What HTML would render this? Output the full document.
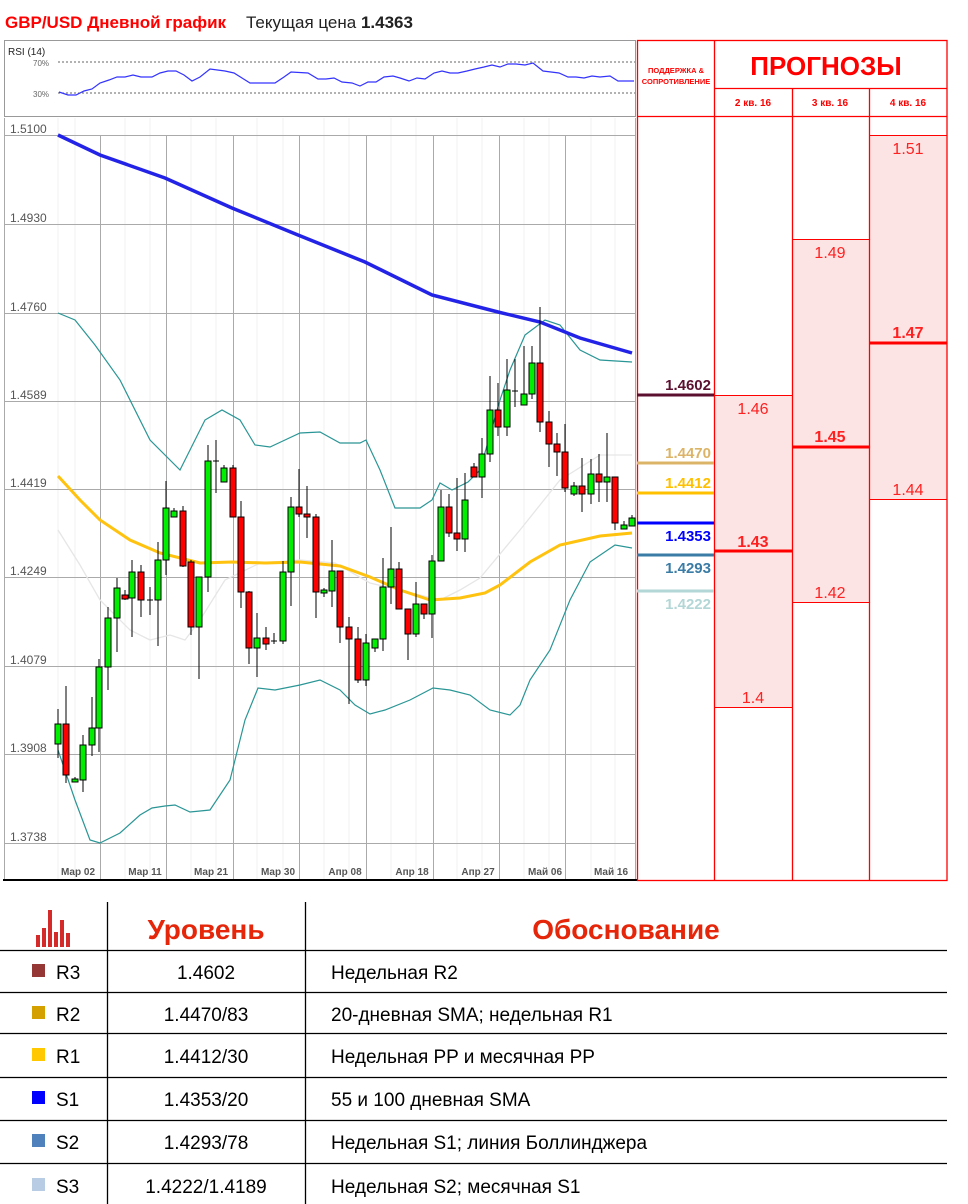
<!DOCTYPE html>
<html><head><meta charset="utf-8"><style>
html,body{margin:0;padding:0;background:#fff;width:968px;height:1204px;overflow:hidden}
svg{display:block;font-family:"Liberation Sans","DejaVu Sans",sans-serif}
</style></head><body>
<svg width="968" height="1204" viewBox="0 0 968 1204" xmlns="http://www.w3.org/2000/svg">
<!-- header -->
<text x="5" y="28" font-size="17" font-weight="bold" fill="#ff0000">GBP/USD Дневной график</text>
<text x="246" y="28" font-size="17" fill="#222">Текущая цена <tspan font-weight="bold">1.4363</tspan></text>
<!-- RSI box -->
<rect x="4.5" y="40.5" width="631" height="76" fill="#fff" stroke="#999"/>
<text x="8" y="55" font-size="10" fill="#222">RSI (14)</text>
<text x="33" y="66" font-size="8" fill="#666">70%</text>
<text x="33" y="97" font-size="8" fill="#666">30%</text>
<line x1="58" y1="62" x2="635" y2="62" stroke="#666" stroke-dasharray="2,2"/>
<line x1="58" y1="93" x2="635" y2="93" stroke="#666" stroke-dasharray="2,2"/>
<polyline fill="none" stroke="#3333ff" stroke-width="1.2" points="59,92 68,95 76,95 84,91 92,89 100,83 109,80 117,77 125,77 133,75 141,77 152,77 160,73 168,71 176,71 184,75 192,81 200,77 210,69 225,71 234,73 242,78 250,83 275,83 284,77 291,72 308,73 318,79 326,79 334,78 342,82 352,83 360,86 368,82 376,82 384,77 393,76 400,78 409,81 417,78 425,79 434,73 442,71 450,73 458,73 467,71 475,69 484,67 492,65 500,67 508,64 516,64 525,65 533,63 543,71 551,72 559,73 568,77 576,77 584,78 592,76 600,77 610,76 618,81 634,81"/>
<!-- chart grid -->
<g stroke="#f0f0f0" stroke-width="1">
<line x1="58" y1="118" x2="58" y2="880"/><line x1="75" y1="118" x2="75" y2="880"/><line x1="125" y1="118" x2="125" y2="880"/><line x1="150" y1="118" x2="150" y2="880"/><line x1="191" y1="118" x2="191" y2="880"/><line x1="216" y1="118" x2="216" y2="880"/><line x1="257" y1="118" x2="257" y2="880"/><line x1="283" y1="118" x2="283" y2="880"/><line x1="324" y1="118" x2="324" y2="880"/><line x1="349" y1="118" x2="349" y2="880"/><line x1="391" y1="118" x2="391" y2="880"/><line x1="416" y1="118" x2="416" y2="880"/><line x1="457" y1="118" x2="457" y2="880"/><line x1="482" y1="118" x2="482" y2="880"/><line x1="524" y1="118" x2="524" y2="880"/><line x1="549" y1="118" x2="549" y2="880"/><line x1="591" y1="118" x2="591" y2="880"/><line x1="615" y1="118" x2="615" y2="880"/>
</g>
<g stroke="#aaa" stroke-width="1">
<line x1="100.5" y1="135" x2="100.5" y2="880"/><line x1="166.5" y1="135" x2="166.5" y2="880"/><line x1="233.5" y1="135" x2="233.5" y2="880"/><line x1="299.5" y1="135" x2="299.5" y2="880"/><line x1="366.5" y1="135" x2="366.5" y2="880"/><line x1="433.5" y1="135" x2="433.5" y2="880"/><line x1="499.5" y1="135" x2="499.5" y2="880"/><line x1="565.5" y1="135" x2="565.5" y2="880"/><line x1="635.5" y1="118" x2="635.5" y2="880"/>
<line x1="4" y1="135.5" x2="635" y2="135.5"/><line x1="4" y1="224.5" x2="635" y2="224.5"/><line x1="4" y1="313.5" x2="635" y2="313.5"/><line x1="4" y1="401.5" x2="635" y2="401.5"/><line x1="4" y1="489.5" x2="635" y2="489.5"/><line x1="4" y1="577.5" x2="635" y2="577.5"/><line x1="4" y1="666.5" x2="635" y2="666.5"/><line x1="4" y1="754.5" x2="635" y2="754.5"/><line x1="4" y1="843.5" x2="635" y2="843.5"/>
<line x1="4.5" y1="118" x2="4.5" y2="880"/>
</g>
<g font-size="12" fill="#555">
<text x="10" y="133">1.5100</text><text x="10" y="222">1.4930</text><text x="10" y="311">1.4760</text><text x="10" y="399">1.4589</text><text x="10" y="487">1.4419</text><text x="10" y="575">1.4249</text><text x="10" y="664">1.4079</text><text x="10" y="752">1.3908</text><text x="10" y="841">1.3738</text>
</g>
<g font-size="10" fill="#555" font-weight="bold" text-anchor="middle">
<text x="78" y="875">Мар 02</text><text x="145" y="875">Мар 11</text><text x="211" y="875">Мар 21</text><text x="278" y="875">Мар 30</text><text x="345" y="875">Апр 08</text><text x="412" y="875">Апр 18</text><text x="478" y="875">Апр 27</text><text x="545" y="875">Май 06</text><text x="611" y="875">Май 16</text>
</g>
<line x1="3" y1="880" x2="637" y2="880" stroke="#000" stroke-width="2"/>
<!-- indicator lines -->
<polyline fill="none" stroke="#e6e6e6" stroke-width="1.3" points="58,530 80,565 100,600 130,630 150,640 170,635 185,640 200,620 225,580 260,563 300,560 335,563 370,583 400,590 420,595 440,600 460,590 480,578 520,530 560,480 600,455 632,455"/>
<polyline fill="none" stroke="#2a9595" stroke-width="1.2" points="58,313 75,320 95,345 120,380 150,440 180,470 205,420 222,410 240,420 255,445 270,447 285,440 300,433 320,432 340,443 360,443 366,440 380,470 395,508 420,508 432,500 440,483 452,490 468,482 480,470 500,400 510,370 525,335 545,320 560,325 580,350 600,360 632,362"/>
<polyline fill="none" stroke="#2a9595" stroke-width="1.2" points="58,750 75,800 90,840 100,843 120,833 140,815 152,808 165,806 175,805 190,812 210,810 230,780 245,720 258,688 275,690 300,685 320,680 340,690 355,705 370,714 385,710 410,700 433,688 450,690 470,695 490,710 510,715 520,705 530,680 550,650 570,600 590,562 615,545 632,548"/>
<polyline fill="none" stroke="#ffc20e" stroke-width="3" points="58,476 80,500 100,520 130,540 160,553 200,563 232,562 265,563 300,562 340,566 370,577 400,590 430,600 460,598 485,593 500,585 530,562 560,545 600,536 632,533"/>
<polyline fill="none" stroke="#2323e8" stroke-width="3.5" points="58,135 100,155 165,178 232,208 298,235 365,262 432,295 498,312 540,322 580,338 632,353"/>
<!-- candles -->
<g stroke="#000" stroke-width="1" id="c">
<line x1="58" y1="709" x2="58" y2="758"/><rect x="55" y="724" width="6" height="20" fill="#00ee00"/>
<line x1="66" y1="686" x2="66" y2="783"/><rect x="63" y="724" width="6" height="51" fill="#ff0000"/>
<line x1="75" y1="777" x2="75" y2="782"/><rect x="72" y="779" width="6" height="3" fill="#00ee00"/>
<line x1="83" y1="735" x2="83" y2="792"/><rect x="80" y="745" width="6" height="35" fill="#00ee00"/>
<line x1="92" y1="697" x2="92" y2="756"/><rect x="89" y="728" width="6" height="17" fill="#00ee00"/>
<line x1="99" y1="659" x2="99" y2="752"/><rect x="96" y="667" width="6" height="61" fill="#00ee00"/>
<line x1="108" y1="607" x2="108" y2="690"/><rect x="105" y="618" width="6" height="49" fill="#00ee00"/>
<line x1="117" y1="578" x2="117" y2="652"/><rect x="114" y="588" width="6" height="30" fill="#00ee00"/>
<line x1="125" y1="590" x2="125" y2="600"/><rect x="122" y="595" width="6" height="4" fill="#ff0000"/>
<line x1="132" y1="560" x2="132" y2="637"/><rect x="129" y="572" width="6" height="26" fill="#00ee00"/>
<line x1="141" y1="565" x2="141" y2="617"/><rect x="138" y="572" width="6" height="28" fill="#ff0000"/>
<line x1="150" y1="587" x2="150" y2="615"/><line x1="147" y1="600" x2="153" y2="600"/>
<line x1="158" y1="542" x2="158" y2="646"/><rect x="155" y="560" width="6" height="40" fill="#00ee00"/>
<line x1="166" y1="481" x2="166" y2="575"/><rect x="163" y="508" width="6" height="52" fill="#00ee00"/>
<line x1="174" y1="508" x2="174" y2="517"/><rect x="171" y="511" width="6" height="6" fill="#00ee00"/>
<line x1="183" y1="506" x2="183" y2="567"/><rect x="180" y="511" width="6" height="55" fill="#ff0000"/>
<line x1="191" y1="560" x2="191" y2="635"/><rect x="188" y="562" width="6" height="65" fill="#ff0000"/>
<line x1="199" y1="577" x2="199" y2="679"/><rect x="196" y="577" width="6" height="50" fill="#00ee00"/>
<line x1="208" y1="445" x2="208" y2="592"/><rect x="205" y="461" width="6" height="116" fill="#00ee00"/>
<line x1="216" y1="440" x2="216" y2="493"/><line x1="213" y1="461" x2="219" y2="461"/>
<line x1="224" y1="465" x2="224" y2="482"/><rect x="221" y="468" width="6" height="14" fill="#00ee00"/>
<line x1="233" y1="465" x2="233" y2="517"/><rect x="230" y="468" width="6" height="49" fill="#ff0000"/>
<line x1="241" y1="501" x2="241" y2="608"/><rect x="238" y="517" width="6" height="75" fill="#ff0000"/>
<line x1="249" y1="591" x2="249" y2="664"/><rect x="246" y="592" width="6" height="56" fill="#ff0000"/>
<line x1="257" y1="613" x2="257" y2="677"/><rect x="254" y="638" width="6" height="10" fill="#00ee00"/>
<line x1="266" y1="627" x2="266" y2="650"/><rect x="263" y="638" width="6" height="6" fill="#ff0000"/>
<line x1="274" y1="633" x2="274" y2="644"/><line x1="271" y1="641" x2="277" y2="641"/>
<line x1="283" y1="561" x2="283" y2="644"/><rect x="280" y="572" width="6" height="69" fill="#00ee00"/>
<line x1="291" y1="497" x2="291" y2="606"/><rect x="288" y="507" width="6" height="65" fill="#00ee00"/>
<line x1="299" y1="469" x2="299" y2="517"/><rect x="296" y="507" width="6" height="7" fill="#ff0000"/>
<line x1="307" y1="486" x2="307" y2="538"/><rect x="304" y="514" width="6" height="3" fill="#ff0000"/>
<line x1="316" y1="514" x2="316" y2="618"/><rect x="313" y="517" width="6" height="75" fill="#ff0000"/>
<line x1="324" y1="588" x2="324" y2="597"/><rect x="321" y="590" width="6" height="3" fill="#00ee00"/>
<line x1="332" y1="540" x2="332" y2="607"/><rect x="329" y="571" width="6" height="20" fill="#00ee00"/>
<line x1="340" y1="571" x2="340" y2="643"/><rect x="337" y="571" width="6" height="56" fill="#ff0000"/>
<line x1="349" y1="617" x2="349" y2="704"/><rect x="346" y="627" width="6" height="12" fill="#ff0000"/>
<line x1="358" y1="627" x2="358" y2="683"/><rect x="355" y="639" width="6" height="41" fill="#ff0000"/>
<line x1="366" y1="634" x2="366" y2="686"/><rect x="363" y="643" width="6" height="37" fill="#00ee00"/>
<line x1="375" y1="639" x2="375" y2="652"/><rect x="372" y="639" width="6" height="9" fill="#00ee00"/>
<line x1="383" y1="558" x2="383" y2="651"/><rect x="380" y="587" width="6" height="52" fill="#00ee00"/>
<line x1="391" y1="527" x2="391" y2="604"/><rect x="388" y="569" width="6" height="18" fill="#00ee00"/>
<line x1="399" y1="562" x2="399" y2="609"/><rect x="396" y="569" width="6" height="40" fill="#ff0000"/>
<line x1="408" y1="609" x2="408" y2="660"/><rect x="405" y="609" width="6" height="25" fill="#ff0000"/>
<line x1="416" y1="582" x2="416" y2="637"/><rect x="413" y="604" width="6" height="30" fill="#00ee00"/>
<line x1="424" y1="604" x2="424" y2="619"/><rect x="421" y="604" width="6" height="10" fill="#ff0000"/>
<line x1="432" y1="555" x2="432" y2="638"/><rect x="429" y="561" width="6" height="53" fill="#00ee00"/>
<line x1="441" y1="490" x2="441" y2="561"/><rect x="438" y="507" width="6" height="54" fill="#00ee00"/>
<line x1="449" y1="494" x2="449" y2="537"/><rect x="446" y="507" width="6" height="26" fill="#ff0000"/>
<line x1="457" y1="478" x2="457" y2="551"/><rect x="454" y="533" width="6" height="6" fill="#ff0000"/>
<line x1="465" y1="473" x2="465" y2="552"/><rect x="462" y="500" width="6" height="39" fill="#00ee00"/>
<line x1="474" y1="463" x2="474" y2="477"/><rect x="471" y="467" width="6" height="10" fill="#ff0000"/>
<line x1="482" y1="438" x2="482" y2="498"/><rect x="479" y="454" width="6" height="23" fill="#00ee00"/>
<line x1="490" y1="376" x2="490" y2="462"/><rect x="487" y="410" width="6" height="44" fill="#00ee00"/>
<line x1="498" y1="383" x2="498" y2="436"/><rect x="495" y="410" width="6" height="17" fill="#ff0000"/>
<line x1="507" y1="359" x2="507" y2="436"/><rect x="504" y="390" width="6" height="37" fill="#00ee00"/>
<line x1="515" y1="359" x2="515" y2="407"/><line x1="512" y1="391" x2="518" y2="391"/>
<line x1="524" y1="346" x2="524" y2="405"/><rect x="521" y="394" width="6" height="11" fill="#00ee00"/>
<line x1="532" y1="346" x2="532" y2="399"/><rect x="529" y="363" width="6" height="31" fill="#00ee00"/>
<line x1="540" y1="307" x2="540" y2="432"/><rect x="537" y="363" width="6" height="59" fill="#ff0000"/>
<line x1="549" y1="411" x2="549" y2="467"/><rect x="546" y="422" width="6" height="22" fill="#ff0000"/>
<line x1="557" y1="433" x2="557" y2="476"/><rect x="554" y="444" width="6" height="8" fill="#ff0000"/>
<line x1="565" y1="424" x2="565" y2="492"/><rect x="562" y="452" width="6" height="36" fill="#ff0000"/>
<line x1="574" y1="482" x2="574" y2="496"/><rect x="571" y="486" width="6" height="8" fill="#00ee00"/>
<line x1="582" y1="458" x2="582" y2="512"/><rect x="579" y="486" width="6" height="8" fill="#ff0000"/>
<line x1="591" y1="459" x2="591" y2="504"/><rect x="588" y="474" width="6" height="20" fill="#00ee00"/>
<line x1="599" y1="454" x2="599" y2="502"/><rect x="596" y="474" width="6" height="8" fill="#ff0000"/>
<line x1="607" y1="433" x2="607" y2="502"/><rect x="604" y="477" width="6" height="5" fill="#00ee00"/>
<line x1="615" y1="477" x2="615" y2="530"/><rect x="612" y="477" width="6" height="46" fill="#ff0000"/>
<line x1="624" y1="521" x2="624" y2="529"/><rect x="621" y="525" width="6" height="4" fill="#00ee00"/>
<line x1="632" y1="515" x2="632" y2="526"/><rect x="629" y="518" width="6" height="8" fill="#00ee00"/>
</g>
<!-- right panel -->
<rect x="869" y="135" width="78" height="364" fill="#fde4e4"/>
<rect x="792" y="239" width="77" height="363" fill="#fde4e4"/>
<rect x="714" y="395" width="78" height="312" fill="#fde4e4"/>
<g stroke="#ff0000" stroke-width="1">
<line x1="869" y1="135.5" x2="947" y2="135.5"/><line x1="869" y1="499.5" x2="947" y2="499.5"/>
<line x1="792" y1="239.5" x2="869" y2="239.5"/><line x1="792" y1="602.5" x2="869" y2="602.5"/>
<line x1="714" y1="395.5" x2="792" y2="395.5"/><line x1="714" y1="707.5" x2="792" y2="707.5"/>
</g>
<g stroke="#ff0000" stroke-width="3">
<line x1="869" y1="343" x2="947" y2="343"/><line x1="792" y1="447" x2="869" y2="447"/><line x1="714" y1="551" x2="792" y2="551"/>
</g>
<g stroke="#ff0000" stroke-width="1.3" fill="none">
<rect x="637.5" y="40.5" width="309.5" height="840"/>
<line x1="714.5" y1="40" x2="714.5" y2="880"/><line x1="792.5" y1="88" x2="792.5" y2="880"/><line x1="869.5" y1="88" x2="869.5" y2="880"/>
<line x1="714" y1="88.5" x2="947" y2="88.5"/><line x1="637" y1="116.5" x2="947" y2="116.5"/>
</g>
<text x="826" y="75" font-size="26" font-weight="bold" fill="#ff0000" text-anchor="middle">ПРОГНОЗЫ</text>
<text x="676" y="73" font-size="7.5" font-weight="bold" fill="#ff0000" text-anchor="middle">ПОДДЕРЖКА &amp;</text>
<text x="676" y="84" font-size="7.5" font-weight="bold" fill="#ff0000" text-anchor="middle">СОПРОТИВЛЕНИЕ</text>
<g font-size="10" font-weight="bold" fill="#ff0000" text-anchor="middle">
<text x="753" y="106">2 кв. 16</text><text x="830" y="106">3 кв. 16</text><text x="908" y="106">4 кв. 16</text>
</g>
<g font-size="16" fill="#ff2020" text-anchor="middle">
<text x="908" y="154">1.51</text><text x="908" y="338" font-weight="bold">1.47</text><text x="908" y="495">1.44</text>
<text x="830" y="258">1.49</text><text x="830" y="442" font-weight="bold">1.45</text><text x="830" y="598">1.42</text>
<text x="753" y="414">1.46</text><text x="753" y="547" font-weight="bold">1.43</text><text x="753" y="703">1.4</text>
</g>
<g stroke-width="3">
<line x1="637" y1="395" x2="714" y2="395" stroke="#5c1030"/>
<line x1="637" y1="463" x2="714" y2="463" stroke="#dcb468"/>
<line x1="637" y1="493" x2="714" y2="493" stroke="#ffc000"/>
<line x1="637" y1="523" x2="714" y2="523" stroke="#0000ff"/>
<line x1="637" y1="555" x2="714" y2="555" stroke="#3a7ca5"/>
<line x1="637" y1="591" x2="714" y2="591" stroke="#b3d6d6"/>
</g>
<g font-size="15" font-weight="bold" text-anchor="end">
<text x="711" y="390" fill="#5c1030">1.4602</text>
<text x="711" y="458" fill="#dcb468">1.4470</text>
<text x="711" y="488" fill="#ffc000">1.4412</text>
<text x="711" y="541" fill="#0000ff">1.4353</text>
<text x="711" y="573" fill="#3a7ca5">1.4293</text>
<text x="711" y="609" fill="#b3d6d6">1.4222</text>
</g>
<!-- table -->
<g stroke="#000" stroke-width="1.3">
<line x1="107.5" y1="902" x2="107.5" y2="1204"/><line x1="305.5" y1="902" x2="305.5" y2="1204"/>
<line x1="0" y1="950.5" x2="947" y2="950.5"/><line x1="0" y1="992.5" x2="947" y2="992.5"/><line x1="0" y1="1033.5" x2="947" y2="1033.5"/><line x1="0" y1="1077.5" x2="947" y2="1077.5"/><line x1="0" y1="1120.5" x2="947" y2="1120.5"/><line x1="0" y1="1163.5" x2="947" y2="1163.5"/>
</g>
<g fill="#d42a2a">
<rect x="36" y="935" width="4" height="12"/><rect x="42" y="928" width="4" height="19"/><rect x="48" y="910" width="4" height="37"/><rect x="54" y="932" width="4" height="15"/><rect x="60" y="920" width="4" height="27"/><rect x="66" y="933" width="4" height="14"/>
</g>
<text x="206" y="939" font-size="28" font-weight="bold" fill="#e5260a" text-anchor="middle">Уровень</text>
<text x="626" y="939" font-size="28" font-weight="bold" fill="#e5260a" text-anchor="middle">Обоснование</text>
<rect x="32" y="964" width="13" height="13" fill="#953735"/>
<rect x="32" y="1006" width="13" height="13" fill="#d4a000"/>
<rect x="32" y="1048" width="13" height="13" fill="#ffc800"/>
<rect x="32" y="1091" width="13" height="13" fill="#0000ff"/>
<rect x="32" y="1134" width="13" height="13" fill="#4f81bd"/>
<rect x="32" y="1178" width="13" height="13" fill="#b8cce4"/>
<g font-size="19" fill="#000">
<text x="56" y="979">R3</text><text x="56" y="1021">R2</text><text x="56" y="1063">R1</text><text x="56" y="1106">S1</text><text x="56" y="1149">S2</text><text x="56" y="1193">S3</text>
</g>
<g font-size="19" fill="#000" text-anchor="middle">
<text x="206" y="979">1.4602</text><text x="206" y="1021">1.4470/83</text><text x="206" y="1063">1.4412/30</text><text x="206" y="1106">1.4353/20</text><text x="206" y="1149">1.4293/78</text><text x="206" y="1193">1.4222/1.4189</text>
</g>
<g font-size="19" fill="#000">
<text x="331" y="979">Недельная R2</text><text x="331" y="1021">20-дневная SMA; недельная R1</text><text x="331" y="1063">Недельная PP и месячная PP</text><text x="331" y="1106">55 и 100 дневная SMA</text><text x="331" y="1149">Недельная S1; линия Боллинджера</text><text x="331" y="1193">Недельная S2; месячная S1</text>
</g>
</svg>
</body></html>
